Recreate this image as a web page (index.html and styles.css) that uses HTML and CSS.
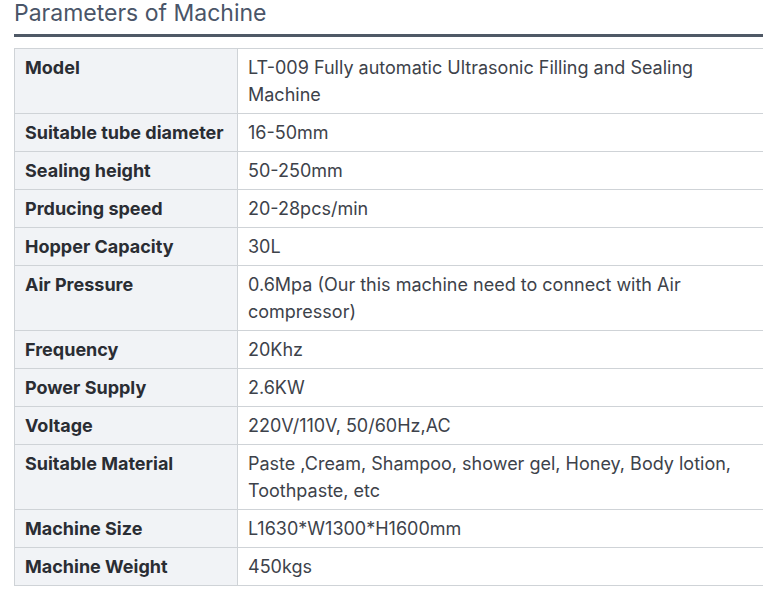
FILE: index.html
```html
<!DOCTYPE html>
<html>
<head>
<meta charset="utf-8">
<link rel="stylesheet" href="styles.css">
</head>
<body>
<div class="wrap">
  <h2 class="title">Parameters of Machine</h2>
  <table class="params">
    <tr><th>Model</th><td>LT-009 Fully automatic Ultrasonic Filling and Sealing Machine</td></tr>
    <tr><th>Suitable tube diameter</th><td>16-50mm</td></tr>
    <tr><th>Sealing height</th><td>50-250mm</td></tr>
    <tr><th>Prducing speed</th><td>20-28pcs/min</td></tr>
    <tr><th>Hopper Capacity</th><td>30L</td></tr>
    <tr><th>Air Pressure</th><td>0.6Mpa (Our this machine need to connect with Air compressor)</td></tr>
    <tr><th>Frequency</th><td>20Khz</td></tr>
    <tr><th>Power Supply</th><td>2.6KW</td></tr>
    <tr><th>Voltage</th><td>220V/110V, 50/60Hz,AC</td></tr>
    <tr><th>Suitable Material</th><td>Paste ,Cream, Shampoo, shower gel, Honey, Body lotion, Toothpaste, etc</td></tr>
    <tr><th>Machine Size</th><td>L1630*W1300*H1600mm</td></tr>
    <tr><th>Machine Weight</th><td>450kgs</td></tr>
  </table>
</div>
</body>
</html>
```

FILE: styles.css
```css
html, body { margin: 0; padding: 0; background: #fff; }
body { font-family: Inter, "Noto Sans", sans-serif; overflow: hidden; }
.wrap { padding-left: 14px; width: 760px; }
.title {
  margin: 0;
  font-size: 23px;
  font-weight: 400;
  line-height: 26px;
  color: #4a5568;
  height: 34px;
  border-bottom: 3px solid #4f5966;
}
.params {
  margin-top: 11px;
  border-collapse: collapse;
  width: 770px;
  font-size: 18px;
  line-height: 27px;
}
.params th, .params td {
  border: 1px solid #cfd3d7;
  padding: 5px 10px;
  vertical-align: top;
  text-align: left;
}
.params th {
  width: 202px;
  background: #f1f3f6;
  font-weight: 700;
  color: #2a2d33;
}
.params td {
  color: #3d424a;
  padding-right: 40px;
}
```
